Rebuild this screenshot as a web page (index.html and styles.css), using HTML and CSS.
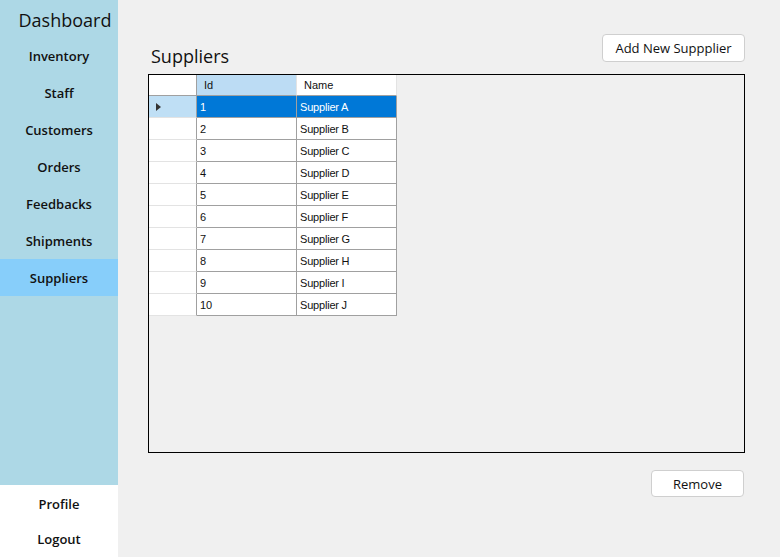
FILE: index.html
```html
<!DOCTYPE html>
<html>
<head>
<meta charset="utf-8">
<link rel="stylesheet" href="styles.css">
</head>
<body>
<div class="app">
  <aside class="sidebar">
    <div class="brand">Dashboard</div>
    <nav class="nav">
      <div class="nav-item">Inventory</div>
      <div class="nav-item">Staff</div>
      <div class="nav-item">Customers</div>
      <div class="nav-item">Orders</div>
      <div class="nav-item">Feedbacks</div>
      <div class="nav-item">Shipments</div>
      <div class="nav-item active">Suppliers</div>
    </nav>
    <div class="bottom">
      <div class="nav-item">Profile</div>
      <div class="nav-item">Logout</div>
    </div>
  </aside>
  <main class="main">
    <div class="head">
      <h1 class="title">Suppliers</h1>
      <button class="btn add">Add New Suppplier</button>
    </div>
    <div class="gridbox">
      <div class="table">
        <div class="rh corner"></div>
        <div class="hc sel-h">Id</div>
        <div class="hc">Name</div>

        <div class="rh cur"><span class="arrow"></span></div>
        <div class="c sel">1</div>
        <div class="c sel">Supplier A</div>

        <div class="rh"></div><div class="c">2</div><div class="c">Supplier B</div>
        <div class="rh"></div><div class="c">3</div><div class="c">Supplier C</div>
        <div class="rh"></div><div class="c">4</div><div class="c">Supplier D</div>
        <div class="rh"></div><div class="c">5</div><div class="c">Supplier E</div>
        <div class="rh"></div><div class="c">6</div><div class="c">Supplier F</div>
        <div class="rh"></div><div class="c">7</div><div class="c">Supplier G</div>
        <div class="rh"></div><div class="c">8</div><div class="c">Supplier H</div>
        <div class="rh"></div><div class="c">9</div><div class="c">Supplier I</div>
        <div class="rh"></div><div class="c">10</div><div class="c">Supplier J</div>
      </div>
    </div>
    <div class="foot">
      <button class="btn remove">Remove</button>
    </div>
  </main>
</div>
</body>
</html>
```

FILE: styles.css
```css
* { box-sizing: border-box; }
html, body { margin: 0; padding: 0; }
body {
  width: 780px;
  height: 557px;
  overflow: hidden;
  background: #f0f0f0;
  font-family: "Open Sans", "Noto Sans", sans-serif;
  color: #111;
}
.app {
  display: flex;
  height: 557px;
}
.sidebar {
  width: 118px;
  flex: none;
  background: #add8e6;
  display: flex;
  flex-direction: column;
}
.brand {
  height: 37px;
  font-size: 18px;
  line-height: 40px;
  text-align: center;
  padding-left: 12px;
  color: #111;
}
.nav { display: flex; flex-direction: column; }
.nav-item {
  height: 37px;
  display: flex;
  align-items: center;
  justify-content: center;
  font-size: 13px;
  font-weight: 600;
  color: #111;
}
.nav-item.active { background: #87cefa; }
.bottom {
  margin-top: auto;
  background: #ffffff;
  height: 72px;
  padding-top: 1px;
  display: flex;
  flex-direction: column;
}
.bottom .nav-item { height: 36px; }

.main {
  flex: 1;
  display: flex;
  flex-direction: column;
  padding: 34px 35px 0 30px;
}
.head {
  display: flex;
  justify-content: space-between;
  align-items: flex-start;
  height: 40px;
}
.title {
  margin: 10px 0 0 3px;
  font-size: 18px;
  font-weight: 400;
  line-height: 24px;
  color: #111;
}
.btn {
  background: #ffffff;
  border: 1px solid #cfcfcf;
  border-radius: 4px;
  font-family: "Open Sans", "Noto Sans", sans-serif;
  font-size: 13px;
  color: #111;
  padding: 0;
}
.add { width: 143px; height: 28px; }
.gridbox {
  height: 379px;
  border: 1px solid #000;
  background: #f0f0f0;
}
.table {
  display: grid;
  grid-template-columns: 48px 100px 100px;
  grid-template-rows: 21px repeat(10, 22px);
  width: 248px;
  font-family: "Liberation Sans", Arial, sans-serif;
  font-size: 11px;
}
.rh {
  background: #ffffff;
  border-right: 1px solid #a0a0a0;
  border-bottom: 1px solid #e3e3e3;
  display: flex;
  align-items: center;
  padding-left: 7px;
}
.rh.corner { border-bottom: 1px solid #a0a0a0; }
.rh.cur { background: #bfdff5; }
.arrow {
  width: 0; height: 0;
  border-top: 4px solid transparent;
  border-bottom: 4px solid transparent;
  border-left: 5px solid #333;
}
.hc {
  background: #ffffff;
  border-right: 1px solid #e3e3e3;
  border-bottom: 1px solid #a0a0a0;
  display: flex;
  align-items: center;
  padding-left: 7px;
  color: #111;
}
.hc.sel-h { background: #bcdcf4; border-right: 1px solid #e3e3e3; }
.c {
  background: #ffffff;
  border-right: 1px solid #a0a0a0;
  border-bottom: 1px solid #a0a0a0;
  display: flex;
  align-items: center;
  padding-left: 3px;
  color: #111;
  letter-spacing: -0.2px;
}
.c.sel { background: #0078d7; color: #fff; }
.foot {
  display: flex;
  justify-content: flex-end;
  padding-top: 17px;
  padding-right: 1px;
}
.remove { width: 93px; height: 27px; }
```
